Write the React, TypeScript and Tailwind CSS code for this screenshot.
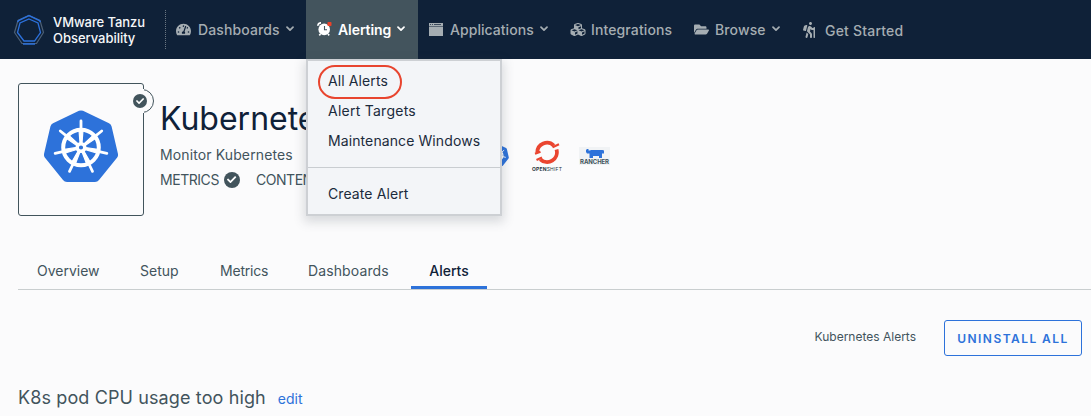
import type { ReactNode } from 'react';
import { FaCheck, FaCubes, FaFolderOpen, FaHiking, FaTachometerAlt } from 'react-icons/fa';

function Chevron() {
  return (
    <svg viewBox="0 0 8 6" className="h-[6px] w-[8px] shrink-0" fill="none" stroke="currentColor" strokeWidth="1.7">
      <path d="M1 1.2 4 4.2 7 1.2" strokeLinecap="round" strokeLinejoin="round" />
    </svg>
  );
}

function TanzuLogo() {
  return (
    <svg viewBox="0 0 32 32" className="h-8 w-8 shrink-0" fill="none" strokeWidth="1.2">
      <path d="M16 1.500 27 6.500 30.500 18.500 23.500 29.500H9L1.500 18.500 5 6.500Z" stroke="#4d6076" />
      <path d="M4.500 8 5.500 6.500 16 1.500 26.500 6.500 27.500 8M10 30H22" stroke="#2c71dc" strokeWidth="1.500" />
      <path d="M16 5 25 9 27.500 18.500 21.500 27H11L4.500 18.500 7 9Z" stroke="#2c71dc" strokeWidth="1.300" />
    </svg>
  );
}

function AlarmIcon() {
  return (
    <svg viewBox="0 0 15 14" className="h-[14px] w-[15px] shrink-0">
      <circle cx="7.2" cy="7.4" r="5.8" fill="#fff" />
      <path d="M.8 3.800A3.200 3.200 0 0 1 4 .8M3.500 12 2.300 13.300M11 12l1.200 1.300" stroke="#fff" strokeWidth="1.7" fill="none" />
      <path d="M7.500 4v3.700H10" stroke="#44565f" strokeWidth="1.100" fill="none" />
      <rect x="10.500" y="0" width="4" height="4" rx=".8" fill="#ec4229" />
    </svg>
  );
}

function WindowIcon() {
  return (
    <svg viewBox="0 0 14 13" className="h-[13px] w-[14px] shrink-0" fill="currentColor">
      <path d="M0 0h14v3H0zM0 3.500h14V13H0z" />
      <path d="M1 1.500h1m1 0h1m1 0h7" stroke="#0f2138" strokeWidth=".7" />
    </svg>
  );
}

function CheckDot({ className }: { className: string }) {
  return (
    <span className={`flex items-center justify-center rounded-full bg-[#42545c] text-white ${className}`}>
      <FaCheck className="h-[58%] w-[58%]" />
    </span>
  );
}

const spokes = [0, 1, 2, 3, 4, 5, 6].map((n) => (n * 360) / 7);

function KubernetesLogo({ className }: { className: string }) {
  return (
    <svg viewBox="0 0 74 72" className={className}>
      <path
        d="M35 .8Q37 0 39 .8L65 13.200Q67 14.200 67.600 16.500L74 44Q74.300 46 73 47.800L55 70Q53.500 72 51 72H23Q20.500 72 19 70L1 47.800Q-.3 46 0 44L6.400 16.500Q7 14.200 9 13.200Z"
        fill="#2d72da"
      />
      <g stroke="#fff" fill="none" strokeLinecap="round">
        <circle cx="37" cy="37.500" r="17.800" strokeWidth="4" />
        {spokes.map((angle) => (
          <g key={angle} transform={`rotate(${angle} 37 37.5)`}>
            <path d="M36 33 35 20H39L38 33Z" fill="#fff" strokeWidth="1.200" />
            <path d="M37 20V11" strokeWidth="2.800" />
          </g>
        ))}
        <circle cx="37" cy="37.500" r="3.800" strokeWidth="3.400" />
      </g>
    </svg>
  );
}

function OpenShiftLogo() {
  return (
    <div className="flex w-[30px] flex-col items-center">
      <svg viewBox="0 0 26 25" className="h-[25px] w-[26px]" fill="none" stroke="#ea4530" strokeWidth="3.800">
        <path d="M3.300 12.500A9.700 9.700 0 0 1 19.800 5.600M22.500 9.500A9.800 9.800 0 0 1 6.300 19.300" />
        <path d="M1 13.800 6.500 11.800M2.500 20 8 17.500M18.500 7.300 25 4.300" strokeWidth="2.200" />
      </svg>
      <span className="mt-px text-[5px] leading-[6px] font-bold tracking-[0.200px] text-[#26343d]">
        OPEN<span className="font-normal">SHIFT</span>
      </span>
    </div>
  );
}

function RancherLogo() {
  return (
    <div className="flex h-[18px] w-[31px] flex-col items-center bg-[#f1f3f5]">
      <svg viewBox="0 0 18 9" className="mt-[2px] h-[9px] w-[18px] shrink-0" fill="#2d72da">
        <path d="M1 0h1.500v1.500H4.500V1h12l1.500.500v3h-2V9H13V7H7V9H3.500V4.500H1L0 3V1z" />
      </svg>
      <span className="text-[6px] leading-[7px] font-bold tracking-[-0.100px] text-[#42545c]">RANCHER</span>
    </div>
  );
}

function NavItem({ icon, label, className, menu }: { icon: ReactNode; label: string; className: string; menu?: boolean }) {
  return (
    <a className={`flex h-full items-center pb-px text-[14px] ${className}`}>
      {icon}
      <span>{label}</span>
      {menu && <span className="ml-[6px]"><Chevron /></span>}
    </a>
  );
}

function AlertingMenu() {
  const row = 'flex h-[30px] items-center pb-px pl-[20px]';
  return (
    <div className="absolute top-[59px] left-0 z-10 h-[157px] w-[196px] border-2 border-[#cdd0d4] bg-[#f3f5f8] pt-[5px] text-[14px] font-normal tracking-[0.100px] text-[#1b2b3c] shadow-[0_4px_10px_2px_rgba(60,70,85,0.180)]">
      <div className={`${row} relative`}>
        <span className="absolute top-[-1px] left-[10px] h-[34px] w-[84px] rounded-[17px] border-2 border-[#e8452f]" />
        All Alerts
      </div>
      <div className={`${row} tracking-[0.250px]`}>Alert Targets</div>
      <div className={row}>Maintenance Windows</div>
      <div className="mt-[11px] mb-[11px] h-px bg-[#c9cdd1]" />
      <div className={row}>Create Alert</div>
    </div>
  );
}

export default function App() {
  return (
    <div className="h-[416px] w-full overflow-hidden bg-[#fbfbfc] font-['Inter',sans-serif] text-[#42545c]">
      <header className="flex h-[59px] items-center bg-[#0f2138] font-medium tracking-[0.120px] text-[#a5adb2]">
        <div className="flex w-[165px] shrink-0 items-center pl-[13px]">
          <TanzuLogo />
          <div className="ml-[8px] text-[13px] leading-[16px] whitespace-nowrap text-[#f5f7f9]">
            <div className="tracking-[-0.080px]">VMware Tanzu</div>
            <div className="tracking-[-0.030px]">Observability</div>
          </div>
        </div>
        <div className="h-[39px] w-0 border-l border-dotted border-[#6b7782]" />
        <NavItem className="w-[140px] pl-[10px]" icon={<FaTachometerAlt className="mr-[7px] h-[15px] w-[15px]" />} label="Dashboards" menu />
        <div className="relative h-full w-[112px] bg-[#43545d] text-white">
          <NavItem className="pl-[11px] font-semibold tracking-[-0.080px]" icon={<span className="mr-[6px]"><AlarmIcon /></span>} label="Alerting" menu />
          <AlertingMenu />
        </div>
        <NavItem className="w-[152px] pl-[11px] tracking-[0.050px]" icon={<span className="mr-[7px]"><WindowIcon /></span>} label="Applications" menu />
        <NavItem className="w-[124px]" icon={<FaCubes className="mr-[5px] h-[15px] w-[16px]" />} label="Integrations" />
        <NavItem className="w-[107px]" icon={<FaFolderOpen className="mr-[6px] h-[15px] w-[15px]" />} label="Browse" menu />
        <NavItem className="pt-[2px] tracking-[0.200px]" icon={<FaHiking className="mr-[8px] h-[16px] w-[16px]" />} label="Get Started" />
      </header>

      <section className="flex h-[184px] pt-[24px] pl-[18px]">
        <div className="relative flex h-[133px] w-[126px] items-center justify-center rounded-[3px] border border-[#42545c]">
          <KubernetesLogo className="mt-[-7px] h-[72px] w-[74px]" />
          <span className="absolute top-[5px] right-[-11px] h-[24px] w-[24px] rounded-full border border-[#42545c] bg-[#fbfbfc] [clip-path:inset(0_0_0_13px)]" />
          <span className="absolute top-[5px] right-[-1px] h-[24px] w-[2px] bg-[#fbfbfc]" />
          <CheckDot className="absolute top-[10px] right-[-4px] h-[14px] w-[14px]" />
        </div>
        <div className="ml-[16px] w-[328px] overflow-hidden whitespace-nowrap">
          <h1 className="mt-[16px] text-[32px] leading-[40px] text-[#0f2138]">Kubernetes</h1>
          <p className="mt-[6px] text-[14px] leading-[20px] tracking-[0.120px]">Monitor Kubernetes</p>
          <div className="mt-[5px] flex items-center text-[14px] leading-[20px] tracking-[-0.450px]">
            METRICS
            <CheckDot className="ml-[5px] h-[16px] w-[16px]" />
            <span className="ml-[16px]">CONTENT</span>
          </div>
        </div>
        <div className="mt-[57px] ml-[-3px] flex items-start">
          <KubernetesLogo className="mt-[4px] h-[22px] w-[25px]" />
          <div className="ml-[22px]"><OpenShiftLogo /></div>
          <div className="mt-[7px] ml-[17px]"><RancherLogo /></div>
        </div>
      </section>

      <nav className="ml-[18px] flex h-[47px] border-b border-[#c9cecf] text-[14px] leading-[20px]">
        <a className="w-[122px] pt-[18px] pl-[19px]">Overview</a>
        <a className="w-[79px] pt-[18px]">Setup</a>
        <a className="w-[89px] pt-[18px] pl-px tracking-[-0.200px]">Metrics</a>
        <a className="w-[103px] pt-[18px] tracking-[0.120px]">Dashboards</a>
        <a className="h-[46px] w-[76px] border-b-[3px] border-[#2d72da] pt-[18px] text-center font-medium text-[#0f2138]">Alerts</a>
      </nav>

      <div className="flex h-[88px] items-start justify-end pt-[30px] pr-[9px]">
        <span className="mt-[7px] mr-[28px] text-[12px] leading-[20px]">Kubernetes Alerts</span>
        <button className="h-[36px] w-[138px] rounded-[3px] border border-[#2d72da] pt-px text-[12px] font-semibold tracking-[1.450px] text-[#2d72da]">UNINSTALL ALL</button>
      </div>

      <div className="flex items-baseline pt-[8px] pl-[18px]">
        <h2 className="text-[18px] leading-[24px] tracking-[0.120px]">K8s pod CPU usage too high</h2>
        <a className="ml-[12px] text-[14px] text-[#2d72da]">edit</a>
      </div>
    </div>
  );
}
